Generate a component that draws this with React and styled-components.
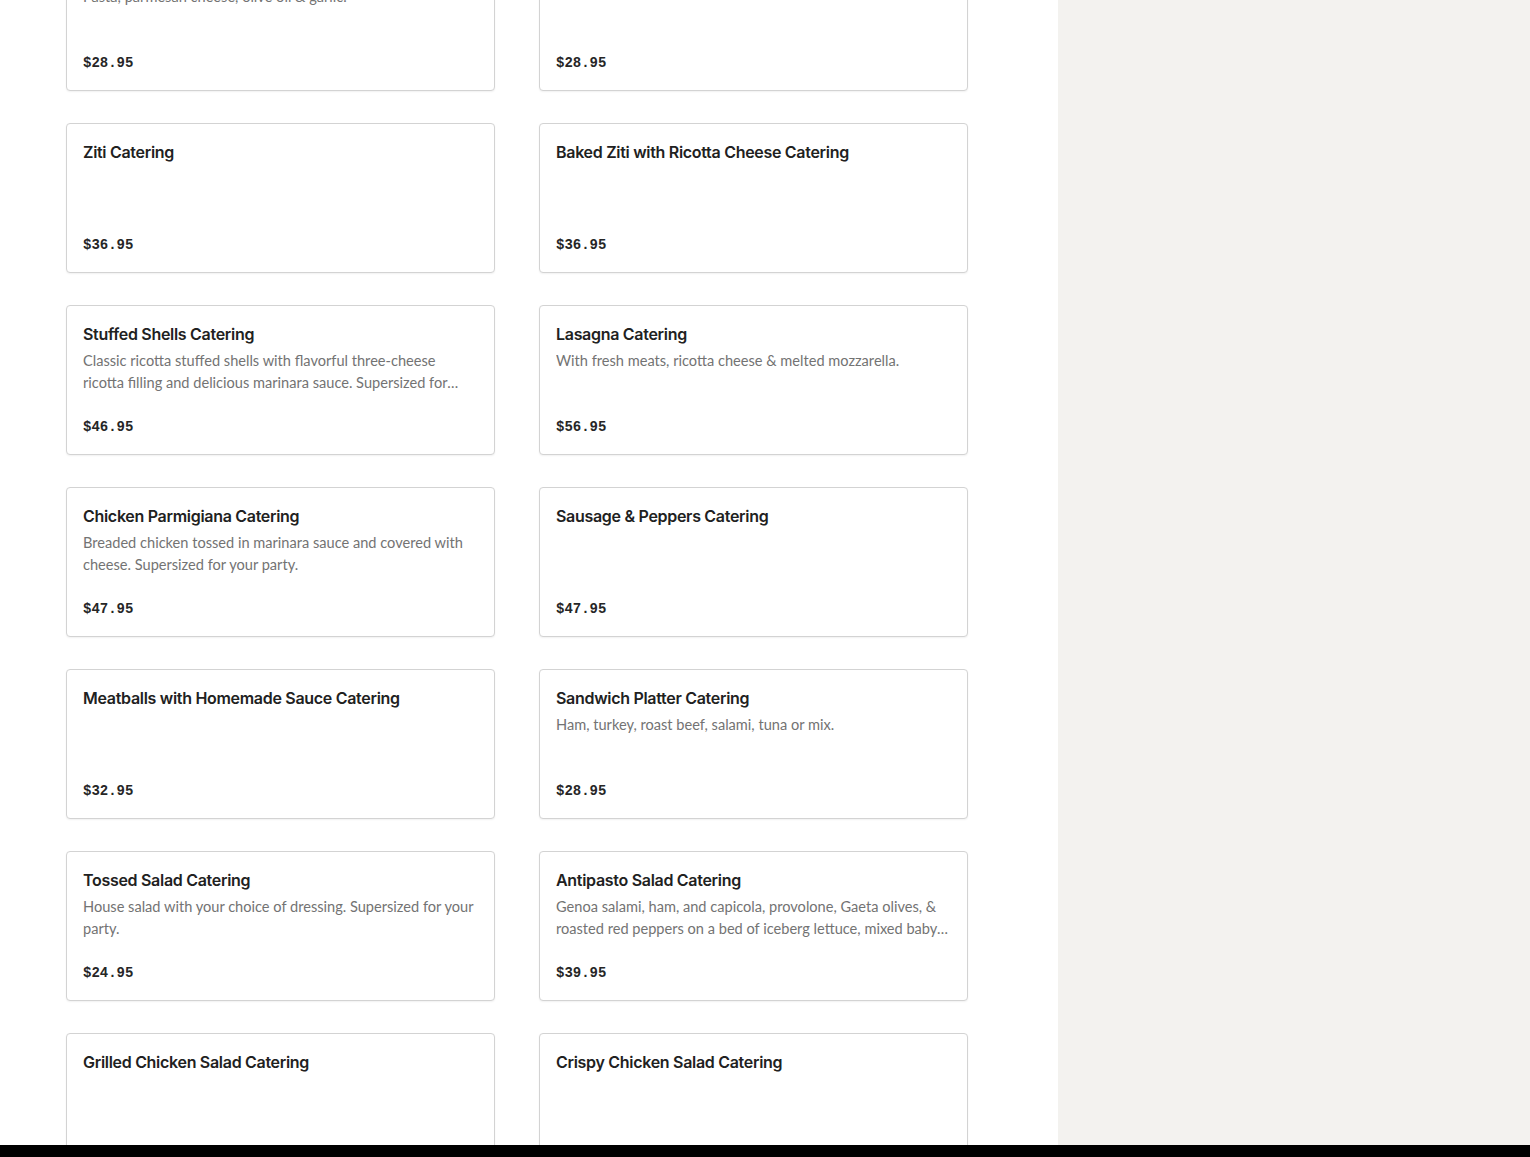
import styled, { createGlobalStyle } from "styled-components";

const GlobalStyle = createGlobalStyle`
  html, body {
    margin: 0;
    padding: 0;
    height: 100%;
    overflow: hidden;
  }
  #root {
    height: 100%;
  }
`;

const items = [
  { name: "Pasta with Garlic & Oil Catering", desc: "Pasta, parmesan cheese, olive oil & garlic.", price: "$28.95" },
  { name: "Pasta with Marinara Sauce Catering", desc: "", price: "$28.95" },
  { name: "Ziti Catering", desc: "", price: "$36.95" },
  { name: "Baked Ziti with Ricotta Cheese Catering", desc: "", price: "$36.95" },
  {
    name: "Stuffed Shells Catering",
    desc: "Classic ricotta stuffed shells with flavorful three-cheese ricotta filling and delicious marinara sauce. Supersized for your party.",
    price: "$46.95",
  },
  { name: "Lasagna Catering", desc: "With fresh meats, ricotta cheese & melted mozzarella.", price: "$56.95" },
  {
    name: "Chicken Parmigiana Catering",
    desc: "Breaded chicken tossed in marinara sauce and covered with cheese. Supersized for your party.",
    price: "$47.95",
  },
  { name: "Sausage & Peppers Catering", desc: "", price: "$47.95" },
  { name: "Meatballs with Homemade Sauce Catering", desc: "", price: "$32.95" },
  { name: "Sandwich Platter Catering", desc: "Ham, turkey, roast beef, salami, tuna or mix.", price: "$28.95" },
  { name: "Tossed Salad Catering", desc: "House salad with your choice of dressing. Supersized for your party.", price: "$24.95" },
  {
    name: "Antipasto Salad Catering",
    desc: "Genoa salami, ham, and capicola, provolone, Gaeta olives, & roasted red peppers on a bed of iceberg lettuce, mixed baby greens and tomatoes.",
    price: "$39.95",
  },
  { name: "Grilled Chicken Salad Catering", desc: "", price: "$34.95" },
  { name: "Crispy Chicken Salad Catering", desc: "", price: "$34.95" },
];

const Page = styled.div`
  display: flex;
  height: 100%;
`;

const Main = styled.main`
  width: 1058px;
  flex-shrink: 0;
  background: #ffffff;
  overflow: hidden;
`;

const Aside = styled.aside`
  flex: 1;
  background: #f3f2ef;
`;

// list is scrolled: first row sits partly above the viewport
const Grid = styled.div`
  display: grid;
  grid-template-columns: repeat(2, 429px);
  column-gap: 44px;
  row-gap: 32px;
  padding-left: 66px;
  margin-top: -59px;
`;

const Card = styled.div`
  box-sizing: border-box;
  height: 150px;
  display: flex;
  flex-direction: column;
  padding: 16px;
  border: 1px solid #d3d3d3;
  border-radius: 4px;
  background: #fff;
  box-shadow: 0 1px 2px rgba(0, 0, 0, 0.06);
`;

const Title = styled.h3`
  margin: 0;
  font-family: "Inter", "Liberation Sans", sans-serif;
  font-size: 16px;
  font-weight: 600;
  line-height: 24px;
  letter-spacing: -0.3px;
  color: #212121;
`;

const Desc = styled.p`
  margin: 4px 0 0;
  font-family: "Lato", "Liberation Sans", sans-serif;
  font-size: 14.6px;
  line-height: 22px;
  color: #737373;
  display: -webkit-box;
  -webkit-line-clamp: 2;
  -webkit-box-orient: vertical;
  overflow: hidden;
`;

const Price = styled.span`
  margin-top: auto;
  font-family: "Liberation Mono", monospace;
  font-size: 14px;
  font-weight: 700;
  line-height: 22px;
  color: #262626;
`;

const BottomBar = styled.div`
  position: fixed;
  left: 0;
  right: 0;
  bottom: 0;
  height: 12px;
  background: #000;
`;

export default function App() {
  return (
    <>
      <GlobalStyle />
      <Page>
        <Main>
          <Grid>
            {items.map((item) => (
              <Card key={item.name}>
                <Title>{item.name}</Title>
                {item.desc ? <Desc>{item.desc}</Desc> : null}
                <Price>{item.price}</Price>
              </Card>
            ))}
          </Grid>
        </Main>
        <Aside />
      </Page>
      <BottomBar />
    </>
  );
}
